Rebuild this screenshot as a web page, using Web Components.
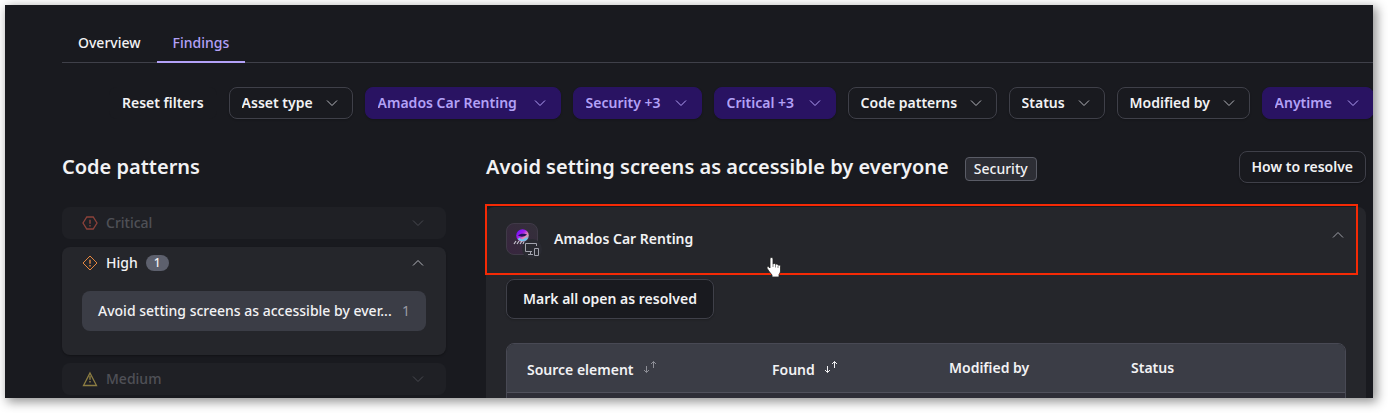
<!DOCTYPE html>
<html lang="en">
<head>
<meta charset="utf-8">
<title>Findings</title>
<style>
  :root {
    --bg: #191a1f; --card: #25262b; --raised: #3b3d46; --line: #3f4049;
    --text: #f2f2f4; --muted: #9a9ba3; --accent: #b3a1f7; --accent-bg: #291362;
  }
  body { margin: 0; background: #fff; color: var(--text); font: 500 14px/20px "Noto Sans", sans-serif; }
</style>
</head>
<body>
<findings-page>
  <tab-bar slot="tabs">
    <tab-link>Overview</tab-link>
    <tab-link selected>Findings</tab-link>
  </tab-bar>
  <filter-bar slot="filters">
    <action-button kind="plain">Reset filters</action-button>
    <filter-select label="Asset type"></filter-select>
    <filter-select label="Amados Car Renting" active roomy></filter-select>
    <filter-select label="Security +3" active></filter-select>
    <filter-select label="Critical +3" active></filter-select>
    <filter-select label="Code patterns"></filter-select>
    <filter-select label="Status"></filter-select>
    <filter-select label="Modified by"></filter-select>
    <filter-select label="Anytime" active></filter-select>
  </filter-bar>
  <pattern-list slot="side" heading="Code patterns">
    <severity-group level="critical" label="Critical" disabled></severity-group>
    <severity-group level="high" label="High" count="1">
      <pattern-item count="1">Avoid setting screens as accessible by ever...</pattern-item>
    </severity-group>
    <severity-group level="medium" label="Medium" disabled></severity-group>
  </pattern-list>
  <pattern-detail heading="Avoid setting screens as accessible by everyone" tag="Security">
    <action-button slot="action">How to resolve</action-button>
    <asset-card label="Amados Car Renting">
      <action-button kind="large">Mark all open as resolved</action-button>
      <findings-table></findings-table>
    </asset-card>
  </pattern-detail>
</findings-page>

<script>
const define = (name, markup, setup) => {
  customElements.define(name, class extends HTMLElement {
    constructor() {
      super();
      const t = document.createElement('template');
      t.innerHTML = markup;
      this.attachShadow({ mode: 'open' }).append(t.content.cloneNode(true));
    }
    connectedCallback() { if (setup) setup(this, this.shadowRoot); }
  });
};
const reset = `*{box-sizing:border-box} button,select{font:inherit;color:inherit;background:none;border:0;margin:0;padding:0;cursor:pointer}`;

define('chevron-icon', `
<style>:host{display:block;width:16px;height:16px} svg{display:block;width:16px;height:16px}
:host([up]) svg{transform:scaleY(-1)}</style>
<svg viewBox="0 0 16 16" fill="none" stroke="currentColor" aria-hidden="true"><path d="M3 5.5l5 5 5-5"/></svg>`);

define('findings-page', `
<style>${reset}
:host{display:block;height:100vh;padding:5px 15px 15px 5px;box-sizing:border-box;overflow:hidden}
main{height:100%;overflow:hidden;background:var(--bg);padding:25px 0 0 57px;}
.frame{height:100%;box-shadow:3px 3px 10px 1px rgba(0,0,0,.42)}
.columns{display:flex;gap:40px;align-items:flex-start;padding:32px 7px 0 0}
.side{flex:0 0 384px;min-width:0}.detail{flex:1;min-width:0}
</style>
<div class="frame"><main>
  <slot name="tabs"></slot>
  <slot name="filters"></slot>
  <div class="columns"><div class="side"><slot name="side"></slot></div><div class="detail"><slot></slot></div></div>
</main></div>`);

define('tab-bar', `
<style>:host{display:block} nav{display:flex;height:33px;box-shadow:inset 0 -1px var(--line)}</style>
<nav><slot></slot></nav>`);

define('tab-link', `
<style>${reset}:host{display:block}
a{display:block;height:33px;padding:3px 16px 0;color:inherit;text-decoration:none}
:host([selected]) a{color:var(--accent);border-bottom:2px solid var(--accent)}</style>
<a href="#"><slot></slot></a>`);

define('filter-bar', `
<style>:host{display:flex;gap:12px;padding:24px 0 0 47px}</style><slot></slot>`);

define('action-button', `
<style>${reset}:host{display:block;flex:none}
button{display:block;height:32px;padding:0 12px;border:1px solid var(--line);border-radius:8px;background:var(--bg);font-weight:600;white-space:nowrap;box-shadow:0 1px 2px rgba(0,0,0,.2)}
:host([kind=plain]) button{border-color:transparent;box-shadow:none}
:host([kind=large]) button{height:40px;padding:0 16px}</style>
<button type="button"><slot></slot></button>`);

define('filter-select', `
<style>${reset}:host{display:grid;flex:none;align-items:center}
select{grid-area:1/1;appearance:none;height:32px;padding:0 38px 0 12px;border:1px solid var(--line);border-radius:8px;font-weight:600;background:var(--bg);box-shadow:0 1px 2px rgba(0,0,0,.2)}
chevron-icon{grid-area:1/1;justify-self:end;margin-right:13px;pointer-events:none;color:#b4b5bc}
:host([active]) select{padding-right:40px;color:var(--accent);background:var(--accent-bg);border-color:var(--accent-bg)}
:host([roomy]) select{padding-right:42px}
:host([active]) chevron-icon{color:var(--accent)}</style>
<select><option></option></select><chevron-icon></chevron-icon>`, (el, r) => {
  const label = el.getAttribute('label');
  r.querySelector('select').setAttribute('aria-label', label);
  r.querySelector('option').textContent = label;
});

define('pattern-list', `
<style>:host{display:block} h2{margin:0 0 24px;font-size:20px;line-height:32px;font-weight:600}
.list{display:grid;grid-template-columns:minmax(0,1fr);gap:8px}</style>
<h2></h2><div class="list"><slot></slot></div>`, (el, r) => {
  r.querySelector('h2').textContent = el.getAttribute('heading');
});

const severity = {
  critical: ['#ff6a55', '<path d="M4.8 2h6.4L15 8l-3.800 6H4.800L1 8z"/>'],
  high: ['#e5873f', '<path d="M8 1l7 7-7 7-7-7z"/>'],
  medium: ['#ffe066', '<path d="M8 2l6.500 12.500h-13z"/>']
};
define('severity-group', `
<style>${reset}:host{display:block;background:var(--card);border-radius:8px;box-shadow:0 1px 2px rgba(0,0,0,.3)}
:host([disabled]){opacity:.5;box-shadow:none} :host([disabled]) .name{color:#85868e}
:host([disabled]) svg{stroke-width:1.300}
:host([disabled]) chevron-icon{color:#777880}
button{display:flex;align-items:center;gap:8px;width:100%;height:32px;padding:0 20px;text-align:left;color:inherit}
svg{width:16px;height:16px;flex:none} .count{background:#5d606d;border-radius:8px;width:23px;font-size:12px;line-height:16px;text-align:center}
.count:empty{display:none} chevron-icon{margin-left:auto;color:#b4b5bc}
.body{padding:12px 20px 24px} :host([disabled]) .body{display:none}</style>
<button type="button"><svg viewBox="0 0 16 16" fill="none" aria-hidden="true"></svg><span class="name"></span><span class="count"></span><chevron-icon></chevron-icon></button>
<div class="body"><slot></slot></div>`, (el, r) => {
  const [color, shape] = severity[el.getAttribute('level')];
  const svg = r.querySelector('svg');
  svg.setAttribute('stroke', color);
  svg.innerHTML = shape + '<path d="M8 4.800v4M8 10v1.500" stroke-width="1.400"/>';
  r.querySelector('.name').textContent = el.getAttribute('label');
  r.querySelector('.count').textContent = el.getAttribute('count') || '';
  const off = el.hasAttribute('disabled');
  r.querySelector('button').disabled = off;
  if (!off) r.querySelector('chevron-icon').setAttribute('up', '');
});

define('pattern-item', `
<style>${reset}:host{display:block}
button{display:flex;align-items:center;justify-content:space-between;gap:8px;width:100%;height:40px;padding:0 16px;border-radius:8px;background:var(--raised);text-align:left}
.name{white-space:nowrap}
.count{color:var(--muted);font-weight:400}</style>
<button type="button"><span class="name"><slot></slot></span><span class="count"></span></button>`, (el, r) => {
  r.querySelector('.count').textContent = el.getAttribute('count');
});

define('pattern-detail', `
<style>:host{display:block} header{display:flex;align-items:center;gap:16px;margin-bottom:24px}
h1{margin:0;font-size:20px;line-height:32px;font-weight:600}
.tag{margin-top:4px;border:1px solid #5a5c66;border-radius:4px;background:#2d2e35;padding:1px 8px}
slot[name=action]{display:block;margin-left:auto}</style>
<header><h1></h1><span class="tag"></span><slot name="action"></slot></header><slot></slot>`, (el, r) => {
  r.querySelector('h1').textContent = el.getAttribute('heading');
  r.querySelector('.tag').textContent = el.getAttribute('tag');
});

define('app-icon', `
<style>:host{display:block;width:36px;height:36px} svg{display:block}</style>
<svg width="36" height="36" viewBox="0 0 36 36" fill="none" aria-hidden="true">
<defs><linearGradient id="tile" x1="1" y1="0" x2="0" y2="1"><stop stop-color="#34303a"/><stop offset="1" stop-color="#38253f"/></linearGradient>
<linearGradient id="orb" x1="0" y1="0" x2="1" y2="1"><stop stop-color="#5a10ff"/><stop offset=".4" stop-color="#a31cf0"/><stop offset=".65" stop-color="#e58fb0"/><stop offset="1" stop-color="#45b8e8"/></linearGradient></defs>
<rect x=".5" y=".5" width="31" height="31" rx="7.500" fill="url(#tile)" stroke="#403a48"/>
<circle cx="16.500" cy="12.500" r="6.300" fill="url(#orb)"/>
<path d="M12 12.500c2-2.300 7-2.300 9-.8-3 2.300-6 2.600-9 .8z" fill="#22105c"/><path d="M12.500 15.500c2 2 5.500 2.500 8.500-.5" stroke="#68c8f2" stroke-width="1.800"/>
<path d="M8 21l2-3M11 21l2-3M14 21l2-3M17 21l1-2" stroke="#c6c3d0" stroke-width="1.200"/>
<circle cx="26" cy="26" r="10" fill="#292a31"/>
<path d="M26 28.500h-6.500v-8h11V23M22 31.500h5M24.500 28.500v3M28.500 25.500h4v7h-4z" stroke="#a2a3ad"/>
</svg>`);

define('hand-pointer', `
<style>:host{display:block;width:16px;height:20px} svg{display:block}</style>
<svg width="16" height="20" viewBox="0 0 16 20" aria-hidden="true"><path d="M4 2c0-2 3-2 3 0v5c1-1 2.500-.5 2.500.5 1-.8 2.500-.3 2.500.8 1-.6 2.500 0 2.500 1.200V14c0 1.500-1 2.500-1.500 3.500V20H6v-2C4.500 16 2.500 14 1.200 11.500.500 10 2 9 3 10l1 1z" fill="#fff" stroke="#222" stroke-width=".8"/><path d="M7 7v3M9.500 8v2.500M12 9v2" stroke="#555" stroke-width=".7"/></svg>`);

define('asset-card', `
<style>${reset}:host{display:block;background:var(--card);border-radius:8px}
header{position:relative}
.toggle{display:flex;align-items:flex-start;width:100%;height:64px;padding:16px 16px 0 20px;text-align:left;font-weight:600}
app-icon{margin-right:12px} .name{line-height:32px}
chevron-icon{margin:4px 4px 0 auto;color:#9fa0a8}
.highlight{position:absolute;inset:-3px 8px -4px -1px;border:2px solid #f52a05;pointer-events:none}
hand-pointer{position:absolute;left:280px;top:50px;pointer-events:none}
.body{display:grid;gap:24px;justify-items:start;padding:8px 20px 20px}</style>
<header><button type="button" class="toggle"><app-icon></app-icon><span class="name"></span><chevron-icon up></chevron-icon></button>
<div class="highlight"></div><hand-pointer></hand-pointer></header>
<div class="body"><slot></slot></div>`, (el, r) => {
  r.querySelector('.name').textContent = el.getAttribute('label');
});

define('sort-icon', `
<style>:host{display:block;color:#8d8e96} :host([active]){color:#f2f2f4} svg{display:block}</style>
<svg width="14" height="16" viewBox="0 0 14 16" fill="none" stroke="currentColor" aria-hidden="true"><path d="M3.500 6v6.500M1 10l2.500 2.500L6 10M10.500 8V1.500M8 4l2.500-2.500L13 4"/></svg>`);

define('findings-table', `
<style>${reset}:host{display:block;box-sizing:border-box;width:100%;border:1px solid #484954;border-radius:8px;overflow:hidden}
table{width:100%;table-layout:fixed;border-collapse:collapse}
th{height:48px;padding:0 0 0 20px;text-align:left;font-weight:600;background:var(--raised);border-bottom:1px solid #50515c}
td{height:40px;background:#2e2e37}
button{display:flex;align-items:center;gap:9px;padding-top:4px} sort-icon{margin-bottom:4px}
.source{width:245px}.found{width:177px}.by{width:182px}</style>
<table><thead><tr>
<th class="source"><button type="button">Source element<sort-icon></sort-icon></button></th>
<th class="found"><button type="button">Found<sort-icon active></sort-icon></button></th>
<th class="by">Modified by</th><th>Status</th></tr></thead>
<tbody><tr><td></td><td></td><td></td><td></td></tr></tbody></table>`);
</script>
</body>
</html>
